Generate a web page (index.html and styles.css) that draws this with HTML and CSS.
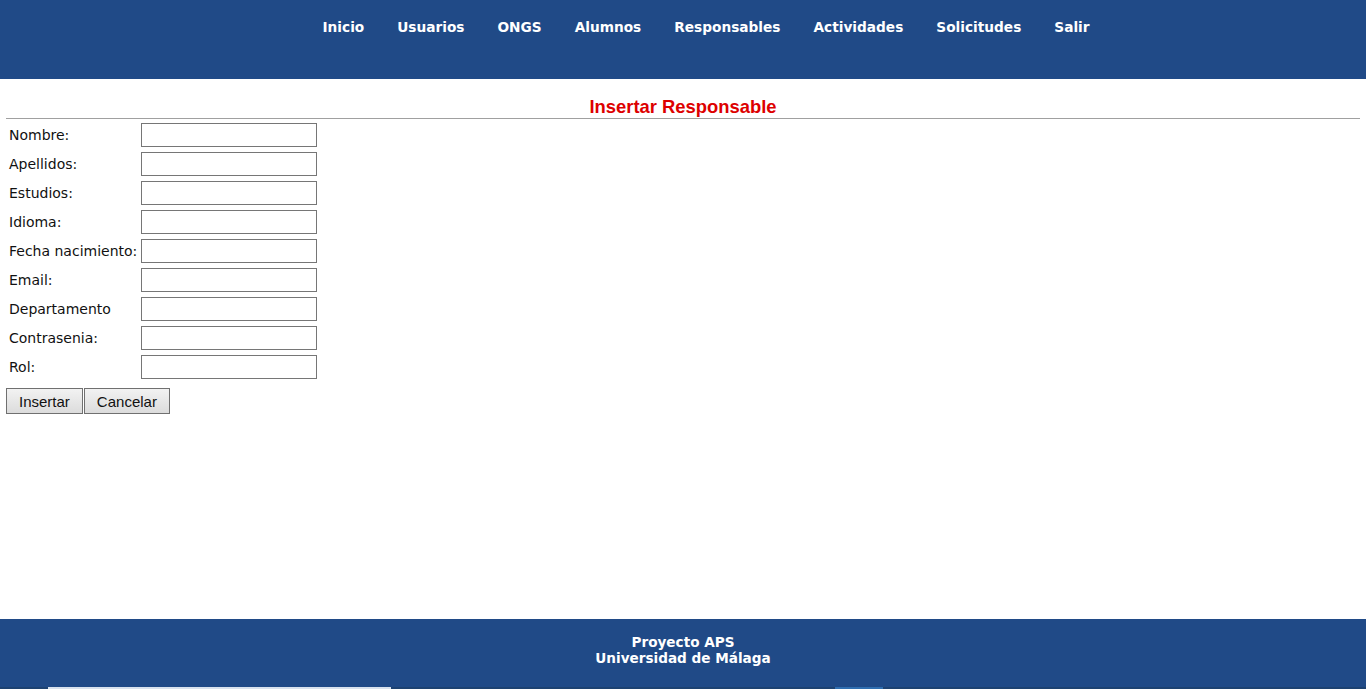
FILE: index.html
```html
<!DOCTYPE html>
<html lang="es">
<head>
<meta charset="utf-8">
<title>Insertar Responsable</title>
<link rel="stylesheet" href="styles.css">
</head>
<body>
<div class="page">
  <header class="topbar">
    <nav class="menu">
      <a href="#">Inicio</a>
      <a href="#">Usuarios</a>
      <a href="#">ONGS</a>
      <a href="#">Alumnos</a>
      <a href="#">Responsables</a>
      <a href="#">Actividades</a>
      <a href="#">Solicitudes</a>
      <a href="#">Salir</a>
    </nav>
  </header>
  <main class="content">
    <h2 class="title">Insertar Responsable</h2>
    <hr class="rule">
    <form class="form">
      <table class="fields">
        <tr><td>Nombre:</td><td><input type="text"></td></tr>
        <tr><td>Apellidos:</td><td><input type="text"></td></tr>
        <tr><td>Estudios:</td><td><input type="text"></td></tr>
        <tr><td>Idioma:</td><td><input type="text"></td></tr>
        <tr><td>Fecha nacimiento:</td><td><input type="text"></td></tr>
        <tr><td>Email:</td><td><input type="text"></td></tr>
        <tr><td>Departamento</td><td><input type="text"></td></tr>
        <tr><td>Contrasenia:</td><td><input type="password"></td></tr>
        <tr><td>Rol:</td><td><input type="text"></td></tr>
      </table>
      <div class="actions">
        <button type="submit" class="btn">Insertar</button>
        <button type="button" class="btn">Cancelar</button>
      </div>
    </form>
  </main>
  <footer class="footer">
    <div class="footer-text">Proyecto APS<br>Universidad de Málaga</div>
    <div class="strip"><span class="strip-light"></span><span class="strip-blue"></span></div>
  </footer>
</div>
</body>
</html>
```

FILE: styles.css
```css
html, body {
  margin: 0;
  padding: 0;
  background: #ffffff;
}
.page {
  display: flex;
  flex-direction: column;
  height: 689px;
  font-family: "DejaVu Sans", Verdana, sans-serif;
}
.topbar {
  background: #204a87;
  height: 79px;
  flex: none;
}
.menu {
  display: flex;
  justify-content: center;
  gap: 33px;
  padding: 17px 0 0 46px;
}
.menu a {
  color: #ffffff;
  text-decoration: none;
  font-weight: bold;
  font-size: 13.7px;
  line-height: 20px;
}
.content {
  flex: 1;
  padding: 0 6px;
}
.title {
  margin: 17px 0 0;
  text-align: center;
  color: #dd0000;
  font-family: "Liberation Sans", Arial, sans-serif;
  font-size: 18.4px;
  font-weight: bold;
  line-height: 22px;
}
.rule {
  margin: 0;
  border: none;
  border-top: 1px solid #a0a0a0;
  height: 0;
}
.form {
  margin: 0;
}
.fields {
  border-collapse: separate;
  border-spacing: 2px;
  margin: 0;
}
.fields td {
  padding: 1px;
  font-size: 14px;
  color: #111111;
  white-space: nowrap;
  height: 25px;
}
.fields input {
  width: 176px;
  height: 24px;
  box-sizing: border-box;
  border: 1px solid #767676;
  margin: 0;
  padding: 1px 2px;
  background: #ffffff;
}
.actions {
  display: flex;
  gap: 1px;
  margin-top: 6px;
}
.btn {
  font-family: "Liberation Sans", Arial, sans-serif;
  font-size: 15px;
  color: #111111;
  height: 26px;
  padding: 0 12px;
  border: 1px solid #707070;
  background: linear-gradient(#f2f2f2, #dcdcdc);
  margin: 0;
}
.footer {
  flex: none;
  height: 70px;
  background: #204a87;
  display: flex;
  flex-direction: column;
}
.footer-text {
  flex: 1;
  text-align: center;
  color: #ffffff;
  font-weight: bold;
  font-size: 13.6px;
  line-height: 16px;
  padding-top: 15px;
}
.strip {
  height: 2px;
  background: #1d4271;
  display: flex;
}
.strip-light {
  margin-left: 48px;
  width: 343px;
  background: #d8e2ee;
}
.strip-blue {
  margin-left: 444px;
  width: 48px;
  background: #2f6eb0;
}
```
